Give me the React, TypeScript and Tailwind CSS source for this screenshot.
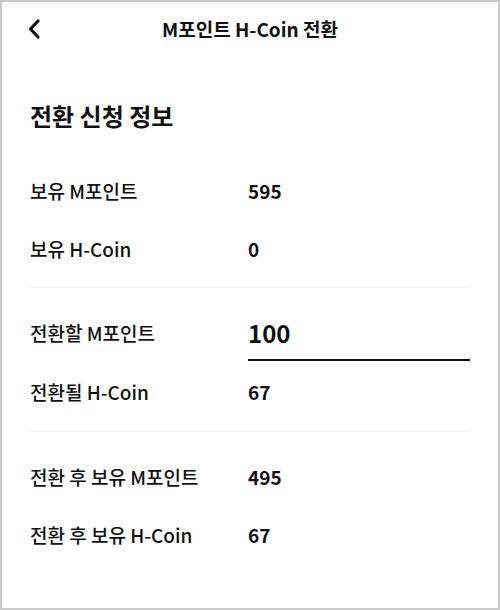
import { useState } from "react";

const font = { fontFamily: '"Noto Sans CJK KR", "Noto Sans", sans-serif' };

function Row({ label, value }: { label: string; value: string }) {
  return (
    <div className="flex items-center h-[58px]">
      <span className="w-[218px] text-[19px] font-medium text-[#111]">{label}</span>
      <span className="text-[19px] font-bold text-[#111]">{value}</span>
    </div>
  );
}

export default function App() {
  const [amount, setAmount] = useState("100");

  return (
    <div style={font} className="w-[500px] h-[610px] bg-white border-2 border-[#c9c9c9] overflow-hidden">
      <header className="relative h-[54px] flex items-center justify-center">
        <button className="absolute left-[21px] top-[12px] p-1">
          <svg width="14" height="22" viewBox="0 0 14 22" fill="none">
            <path d="M11 3 L3.5 11 L11 19" stroke="#111" strokeWidth="3.2" strokeLinecap="round" strokeLinejoin="round" />
          </svg>
        </button>
        <h1 className="text-[19px] font-bold text-[#111]">M포인트 H-Coin 전환</h1>
      </header>

      <div className="px-[28px]">
        <h2 className="pt-[42px] pb-[28px] text-[24px] font-bold text-[#111]">전환 신청 정보</h2>

        <Row label="보유 M포인트" value="595" />
        <Row label="보유 H-Coin" value="0" />

        <div className="mt-[9px] h-px bg-[#f2f2f2]" />

        <div className="flex items-end h-[75px]">
          <span className="w-[218px] mb-[16px] text-[19px] font-medium text-[#111]">전환할 M포인트</span>
          <div className="flex-1 mb-[2px] border-b-2 border-[#111] pb-[8px]">
            <input
              value={amount}
              onChange={(e) => setAmount(e.target.value)}
              className="w-full h-[36px] text-[24px] font-bold text-[#111] outline-none bg-transparent"
            />
          </div>
        </div>
        <Row label="전환될 H-Coin" value="67" />

        <div className="mt-[10px] h-px bg-[#f2f2f2]" />

        <div className="pt-[16px]">
          <Row label="전환 후 보유 M포인트" value="495" />
          <Row label="전환 후 보유 H-Coin" value="67" />
        </div>
      </div>
    </div>
  );
}
